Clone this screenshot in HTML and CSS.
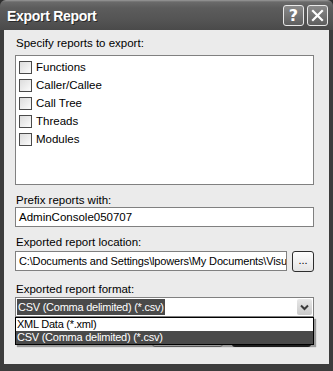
FILE: index.html
```html
<!DOCTYPE html>
<html>
<head>
<meta charset="utf-8">
<link rel="stylesheet" href="styles.css">
</head>
<body>
<div class="window">
  <div class="titlebar">
    <span class="title">Export Report</span>
    <div class="tbuttons">
      <span class="tbtn help">?</span>
      <span class="tbtn close"><svg width="13" height="13" viewBox="0 0 13 13"><path d="M2 2 L11 11 M11 2 L2 11" stroke="#fff" stroke-width="2.2" stroke-linecap="square"/></svg></span>
    </div>
  </div>
  <div class="body">
    <div class="group g1">
      <div class="label">Specify reports to export:</div>
      <div class="listbox">
        <div class="row"><span class="cb"></span>Functions</div>
        <div class="row"><span class="cb"></span>Caller/Callee</div>
        <div class="row"><span class="cb"></span>Call Tree</div>
        <div class="row"><span class="cb"></span>Threads</div>
        <div class="row"><span class="cb"></span>Modules</div>
      </div>
    </div>
    <div class="group g2">
      <div class="label">Prefix reports with:</div>
      <div class="textbox">AdminConsole050707</div>
    </div>
    <div class="group g3">
      <div class="label">Exported report location:</div>
      <div class="pathrow">
        <div class="textbox path">C:\Documents and Settings\lpowers\My Documents\Visu</div>
        <div class="browse">...</div>
      </div>
    </div>
    <div class="group g4">
      <div class="label">Exported report format:</div>
      <div class="combo">
        <span class="sel">CSV (Comma delimited) (*.csv)</span>
        <span class="arrow"><svg width="9" height="7" viewBox="0 0 9 7"><path d="M1 1.5 L4.5 5 L8 1.5" fill="none" stroke="#3a3a3a" stroke-width="2"/></svg></span>
        <div class="popup">
          <div class="opt">XML Data (*.xml)</div>
          <div class="opt active">CSV (Comma delimited) (*.csv)</div>
        </div>
      </div>
    </div>
    <div class="buttons">
      <div class="btn ok"></div>
      <div class="btn cancel default"></div>
    </div>
  </div>
</div>
</body>
</html>
```
FILE: styles.css
```css
* { box-sizing: border-box; }
html, body { margin: 0; padding: 0; background: #2e2e2e; }
body { width: 333px; height: 371px; overflow: hidden; }
.window {
  width: 333px; height: 371px;
  background: #3c3c3c;
  border-radius: 6px 6px 0 0;
  display: flex; flex-direction: column;
  padding: 0 4px 7px 4px;
}
.titlebar {
  height: 30px; margin: 0 -4px;
  border-radius: 6px 6px 0 0;
  background: linear-gradient(#9a9a9a 0, #6a6a6a 2px, #5c5c5c 8px, #545454 20px, #4a4a4a 30px);
  display: flex; align-items: center; justify-content: space-between;
  padding: 0 5px 0 7px;
}
.title {
  color: #fff; font-family: "Liberation Sans", Arial, sans-serif; font-weight: bold;
  font-size: 14px; letter-spacing: -0.3px; margin-top: 2px;
  text-shadow: 1px 1px 0 #2a2a2a;
}
.tbuttons { display: flex; gap: 3px; margin-top: 1px; }
.tbtn {
  width: 21px; height: 21px; border: 1px solid #e8e8e8; border-radius: 3px;
  background: linear-gradient(#8a8a8a, #5e5e5e);
  color: #fff; font-family: "DejaVu Sans", sans-serif; font-weight: bold; font-size: 16px;
  display: flex; align-items: center; justify-content: center; line-height: 1;
}
.body {
  flex: 1; background: #ebebeb;
  padding: 6px 15px 0 11px;
  font-family: "Liberation Sans", Arial, sans-serif; font-size: 11.5px; color: #000;
  display: flex; flex-direction: column;
}
.label { height: 14px; line-height: 14px; padding-left: 1px; }
.listbox {
  margin-top: 5px; height: 130px; background: #fff; border: 1px solid #808080;
  padding: 2px 3px;
}
.row { height: 18px; display: flex; align-items: center; gap: 4px; }
.cb { width: 13px; height: 13px; border: 1px solid #4a4a4a; background: linear-gradient(135deg, #dcdcdc, #fbfbfb); }
.g2 { margin-top: 8px; }
.g3 { margin-top: 8px; }
.g3 .pathrow { margin-top: 2px; }
.g4 { margin-top: 10px; }
.g4 .combo { margin-top: 1px; }
.textbox {
  height: 20px; background: #fff; border: 1px solid #808080;
  line-height: 18px; padding-left: 3px; white-space: nowrap; overflow: hidden;
}
.pathrow { display: flex; gap: 5px; }
.path { flex: 1; font-size: 11px; letter-spacing: -0.15px; }
.browse {
  width: 22px; height: 21px; border: 1px solid #2e2e2e; border-radius: 3px;
  background: linear-gradient(#fdfdfd, #e4e4e4);
  text-align: center; line-height: 17px; font-size: 11px;
}
.combo {
  position: relative; height: 20px; background: #fff; border: 1px solid #808080;
  display: flex; align-items: center; padding: 0 1px;
  font-size: 11px; letter-spacing: -0.25px;
}
.sel { background: #4a4a4a; color: #fff; height: 16px; line-height: 16px; padding: 0 1px; white-space: nowrap; }
.arrow {
  margin-left: auto; width: 15px; height: 16px; border-radius: 2px;
  background: linear-gradient(#e8e8e8, #c9c9c9);
  display: flex; align-items: center; justify-content: center;
}
.popup {
  position: absolute; left: -1px; right: -1px; top: 19px;
  background: #fff; border: 1px solid #000;
  box-shadow: 2px 2px 1px rgba(0,0,0,0.35);
  z-index: 2;
}
.opt { height: 13px; line-height: 13px; padding-left: 1px; white-space: nowrap; }
.opt.active { background: #4a4a4a; color: #fff; }
.buttons { display: flex; justify-content: flex-end; gap: 9px; margin-top: 7px; padding-right: 3px; }
.btn {
  height: 23px; border: 1px solid #8a8a8a; border-radius: 3px;
  background: linear-gradient(#fdfdfd, #ececec);
}
.ok { width: 71px; }
.cancel { width: 79px; }
.default { border: 1px solid #2e2e2e; border-bottom-width: 2px; }
```
